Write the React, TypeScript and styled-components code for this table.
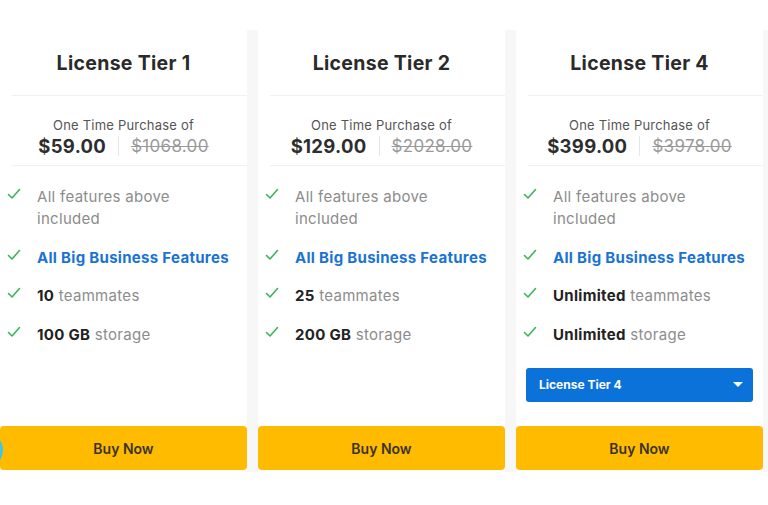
import React from "react";
import styled, { createGlobalStyle } from "styled-components";

const Global = createGlobalStyle`
  html, body { margin: 0; padding: 0; background: #ffffff; }
  body { font-family: Inter, "Open Sans", Arial, sans-serif; -webkit-font-smoothing: antialiased; }
  * { box-sizing: border-box; }
`;

const Page = styled.div`
  position: relative;
  width: 768px;
  height: 505px;
  overflow: hidden;
  background: #ffffff;
  padding-top: 30px;
`;

const Row = styled.div`
  display: flex;
  gap: 11px;
  height: 442px;
  background: #f7f7f7;
`;

const Card = styled.div`
  width: 247px;
  flex: none;
  display: flex;
  flex-direction: column;
  background: #ffffff;
`;

const Header = styled.div`
  height: 65px;
  display: flex;
  align-items: center;
  justify-content: center;
  font-size: 19.5px;
  letter-spacing: 0.3px;
  font-weight: 700;
  color: #2a2a2a;
  padding-top: 1px;
`;

const Divider = styled.div`
  height: 1px;
  margin: 0 0 0 12px;
  background: #f1f1f1;
`;

const PriceBlock = styled.div`
  height: 69px;
  display: flex;
  flex-direction: column;
  align-items: center;
  padding-top: 21px;
`;

const Caption = styled.div`
  font-size: 13px;
  line-height: 17px;
  letter-spacing: 0.2px;
  color: #555555;
`;

const PriceLine = styled.div`
  display: flex;
  align-items: center;
  height: 24px;
`;

const Price = styled.span`
  font-size: 18.5px;
  letter-spacing: 0.3px;
  font-weight: 700;
  color: #2e2e2e;
`;

const Sep = styled.span`
  width: 1px;
  height: 20px;
  background: #e6e6e6;
  margin: 0 12px;
`;

const OldPrice = styled.span`
  font-size: 17px;
  letter-spacing: 0.3px;
  color: #9a9a9a;
  text-decoration: line-through;
`;

const Features = styled.ul`
  list-style: none;
  margin: 0;
  padding: 20px 0 0 7px;
  display: flex;
  flex-direction: column;
  gap: 16.5px;
`;

const Feature = styled.li`
  display: flex;
  align-items: flex-start;
  gap: 16px;
  font-size: 15px;
  line-height: 22px;
  letter-spacing: 0.3px;
  color: #8c8c8c;
`;

const Check = styled.svg`
  flex: none;
  width: 14px;
  height: 12px;
  margin-top: 2px;
`;

const Strong = styled.b<{ $blue?: boolean }>`
  font-weight: 700;
  color: ${(p) => (p.$blue ? "#1a73d2" : "#222222")};
`;

const Select = styled.div`
  margin: 22px 10px 0 10px;
  height: 34px;
  border-radius: 3px;
  background: #0a72d8;
  color: #ffffff;
  font-size: 12px;
  font-weight: 700;
  display: flex;
  align-items: center;
  justify-content: space-between;
  padding: 0 10px 0 13px;
`;

const Caret = styled.span`
  width: 0;
  height: 0;
  border-left: 5px solid transparent;
  border-right: 5px solid transparent;
  border-top: 5px solid #ffffff;
`;

const BuyButton = styled.button`
  margin-top: auto;
  margin-bottom: 2px;
  height: 44px;
  width: 100%;
  border: none;
  border-radius: 4px;
  background: #ffbb00;
  color: #3a3328;
  font-family: inherit;
  font-size: 14px;
  font-weight: 600;
  cursor: pointer;
`;

const Bubble = styled.span`
  position: absolute;
  left: -9px;
  top: 439px;
  width: 12px;
  height: 22px;
  border-radius: 50%;
  background: #3fc6e3;
`;

const CheckIcon = () => (
  <Check viewBox="0 0 14 12">
    <polyline points="1.5,6.5 5,10 12.5,1.5" fill="none" stroke="#3bb35c" strokeWidth="1.6" strokeLinecap="round" strokeLinejoin="round" />
  </Check>
);

type Tier = {
  name: string;
  price: string;
  old: string;
  team: string;
  storage: string;
  select?: string;
};

const tiers: Tier[] = [
  { name: "License Tier 1", price: "$59.00", old: "$1068.00", team: "10", storage: "100 GB" },
  { name: "License Tier 2", price: "$129.00", old: "$2028.00", team: "25", storage: "200 GB" },
  { name: "License Tier 4", price: "$399.00", old: "$3978.00", team: "Unlimited", storage: "Unlimited", select: "License Tier 4" },
];

export default function App() {
  return (
    <>
      <Global />
      <Page>
        <Row>
          {tiers.map((t) => (
            <Card key={t.name}>
              <Header>{t.name}</Header>
              <Divider />
              <PriceBlock>
                <Caption>One Time Purchase of</Caption>
                <PriceLine>
                  <Price>{t.price}</Price>
                  <Sep />
                  <OldPrice>{t.old}</OldPrice>
                </PriceLine>
              </PriceBlock>
              <Divider />
              <Features>
                <Feature>
                  <CheckIcon />
                  <span>
                    All features above
                    <br />
                    included
                  </span>
                </Feature>
                <Feature>
                  <CheckIcon />
                  <Strong $blue>All Big Business Features</Strong>
                </Feature>
                <Feature>
                  <CheckIcon />
                  <span>
                    <Strong>{t.team}</Strong> teammates
                  </span>
                </Feature>
                <Feature>
                  <CheckIcon />
                  <span>
                    <Strong>{t.storage}</Strong> storage
                  </span>
                </Feature>
              </Features>
              {t.select && (
                <Select>
                  {t.select}
                  <Caret />
                </Select>
              )}
              <BuyButton>Buy Now</BuyButton>
            </Card>
          ))}
        </Row>
        <Bubble />
      </Page>
    </>
  );
}
